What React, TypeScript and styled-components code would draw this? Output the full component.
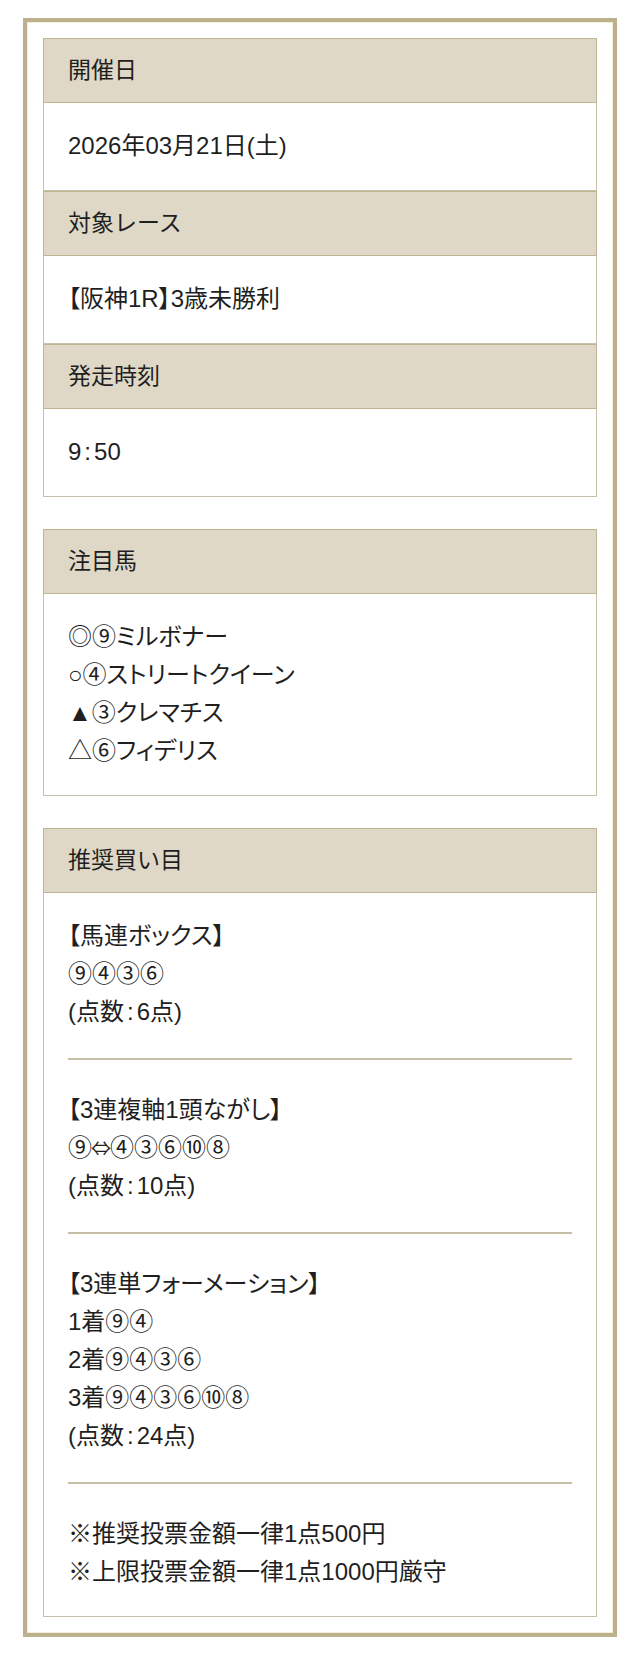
import React from "react";
import styled, { createGlobalStyle } from "styled-components";

const GlobalStyle = createGlobalStyle`
  html, body {
    margin: 0;
    padding: 0;
    background: #ffffff;
  }
  body {
    font-family: "Liberation Sans", "Noto Sans CJK JP", sans-serif;
    color: #1f1f1f;
  }
`;

const Frame = styled.div`
  box-sizing: border-box;
  width: 594px;
  margin: 18px auto 0;
  border: 4px solid #bcb08d;
  box-shadow: inset 0 0 0 1px #f4eed9;
  padding: 16px;
  display: flex;
  flex-direction: column;
  gap: 32px;
`;

const Box = styled.section`
  display: flex;
  flex-direction: column;
`;

const Header = styled.div`
  background: #e0d8c6;
  border: 1px solid #c0b592;
  padding: 12px 24px 13px;
  font-size: 23px;
  line-height: 38px;
  height: 38px;
`;

const Body = styled.div`
  border: 1px solid #c9c2aa;
  border-top: none;
  padding: 24px 24px 25px;
  font-size: 24px;
  line-height: 38px;
  font-feature-settings: "palt";
`;

const Line = styled.div`
  white-space: nowrap;
  height: 38px;
`;

const Block = styled.div`
  padding-bottom: 27px;
  border-bottom: 2px solid #c5bea6;
  margin-bottom: 31px;
  &:last-child {
    padding-bottom: 0;
    border-bottom: none;
    margin-bottom: 0;
  }
`;

const Bracket = styled.span`
  font-family: "Noto Sans CJK JP", sans-serif;
  line-height: 1;
`;

const Colon = styled.span`
  margin: 0 3px;
`;

const Arrow = styled.span`
  font-family: "Noto Sans CJK JP", sans-serif;
  font-size: 20px;
  line-height: 1;
  margin: 0 -1px;
`;

function renderText(s: string) {
  return s.split(/([【】:⇔])/).map((part, i) => {
    if (part === "【" || part === "】") return <Bracket key={i}>{part}</Bracket>;
    if (part === ":") return <Colon key={i}>{part}</Colon>;
    if (part === "⇔") return <Arrow key={i}>{part}</Arrow>;
    return <React.Fragment key={i}>{part}</React.Fragment>;
  });
}

type Row = { title: string; value: string };

const info: Row[] = [
  { title: "開催日", value: "2026年03月21日(土)" },
  { title: "対象レース", value: "【阪神1R】3歳未勝利" },
  { title: "発走時刻", value: "9:50" },
];

const horses = [
  "◎⑨ミルボナー",
  "○④ストリートクイーン",
  "▲③クレマチス",
  "△⑥フィデリス",
];

const bets: string[][] = [
  ["【馬連ボックス】", "⑨④③⑥", "(点数:6点)"],
  ["【3連複軸1頭ながし】", "⑨⇔④③⑥⑩⑧", "(点数:10点)"],
  [
    "【3連単フォーメーション】",
    "1着⑨④",
    "2着⑨④③⑥",
    "3着⑨④③⑥⑩⑧",
    "(点数:24点)",
  ],
  ["※推奨投票金額一律1点500円", "※上限投票金額一律1点1000円厳守"],
];

export default function App() {
  return (
    <>
      <GlobalStyle />
      <Frame>
        <Box>
          {info.map((r) => (
            <React.Fragment key={r.title}>
              <Header>{r.title}</Header>
              <Body>
                <Line>{renderText(r.value)}</Line>
              </Body>
            </React.Fragment>
          ))}
        </Box>
        <Box>
          <Header>注目馬</Header>
          <Body>
            {horses.map((h) => (
              <Line key={h}>{renderText(h)}</Line>
            ))}
          </Body>
        </Box>
        <Box>
          <Header>推奨買い目</Header>
          <Body>
            {bets.map((b, i) => (
              <Block key={i}>
                {b.map((l) => (
                  <Line key={l}>{renderText(l)}</Line>
                ))}
              </Block>
            ))}
          </Body>
        </Box>
      </Frame>
    </>
  );
}
